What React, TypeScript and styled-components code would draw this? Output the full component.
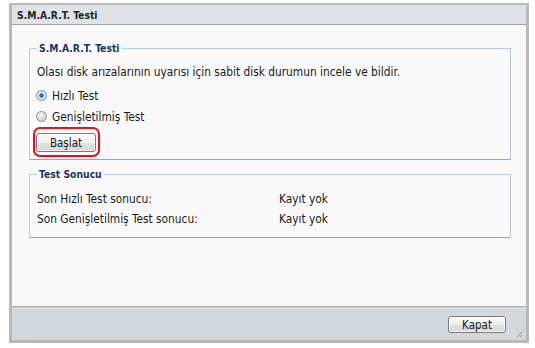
import React from "react";
import styled, { createGlobalStyle } from "styled-components";

const Global = createGlobalStyle`
  html, body { margin: 0; padding: 0; background: #ffffff; }
  body { font-family: "DejaVu Sans Condensed", "DejaVu Sans", sans-serif; font-size: 11.8px; color: #1a1a1a; }
`;

const Dialog = styled.div`
  margin: 3px 0 0 9px;
  width: 520px;
  height: 340px;
  box-sizing: border-box;
  border-style: solid;
  border-color: #b9b9b9;
  border-width: 2px 3px 3px 3px;
  display: flex;
  flex-direction: column;
  background: #f9f9f9;
`;

const TitleBar = styled.div`
  height: 19px;
  flex: none;
  background: #dfe3e7;
  border-bottom: 1px solid #a3a3a3;
  display: flex;
  align-items: center;
  padding-left: 5px;
  font-weight: bold;
  font-size: 10.3px;
  color: #222;
`;

const Content = styled.div`
  flex: 1;
  padding: 17px 15px 0 17px;
  display: flex;
  flex-direction: column;
  gap: 8px;
`;

const Group = styled.fieldset<{ $bottom: number }>`
  margin: 0;
  padding: 0 7px ${(p) => p.$bottom}px 7px;
  border: 1px solid #b2cbe3;
  border-bottom-color: #86abd0;
  min-width: 0;
`;

const Legend = styled.legend`
  padding: 0 2px;
  line-height: 13px;
  font-weight: bold;
  font-size: 10.3px;
  color: #1b3560;
`;

const Description = styled.div`
  margin-top: 9px;
  margin-bottom: 5px;
  line-height: 16px;
`;

const RadioRow = styled.label`
  display: flex;
  align-items: center;
  height: 21px;
  gap: 5px;
`;

const Radio = styled.input.attrs({ type: "radio" })`
  appearance: none;
  margin: 0 0 0 -1px;
  width: 11px;
  height: 11px;
  border-radius: 50%;
  border: 1px solid #8f8f8f;
  background: radial-gradient(circle at 40% 35%, #f6f6f6 0%, #d8d8d8 55%, #bdbdbd 100%);
  &:checked {
    background: radial-gradient(circle at 50% 50%, #3a86d6 0%, #1f5fae 30%, #e4eaf2 38%, #c9c9c9 100%);
    border-color: #7d8ea3;
  }
`;

const Highlight = styled.div`
  width: fit-content;
  margin-left: -4px;
  padding: 4px 2px 3px 1px;
  border: 2px solid #e3101b;
  border-radius: 7px;
  display: flex;
`;

const Button = styled.button<{ $w: number; $h: number }>`
  width: ${(p) => p.$w}px;
  height: ${(p) => p.$h}px;
  box-sizing: border-box;
  padding: 0;
  font-family: inherit;
  font-size: 11.5px;
  color: #1a1a1a;
  border: 1px solid #7b7b7b;
  border-radius: 3px;
  background: linear-gradient(#fbfbfb 0%, #f0f0f0 50%, #e1e1e1 51%, #d9d9d9 100%);
  box-shadow: inset 0 0 0 1px rgba(255, 255, 255, 0.7);
`;

const ResultGrid = styled.div`
  margin-top: 8px;
  display: grid;
  grid-template-columns: 242px 1fr;
  grid-auto-rows: 20px;
  align-items: center;
`;

const Footer = styled.div`
  flex: none;
  height: 34px;
  box-sizing: border-box;
  border-top: 1px solid #a9a9a9;
  background: #d3d8dc;
  display: flex;
  justify-content: flex-end;
  align-items: flex-start;
  padding: 9px 20px 0 0;
  position: relative;
`;

const Grip = styled.svg`
  position: absolute;
  right: 3px;
  bottom: 2px;
`;

export default function App() {
  return (
    <>
      <Global />
      <Dialog>
        <TitleBar>S.M.A.R.T. Testi</TitleBar>
        <Content>
          <Group $bottom={2}>
            <Legend>S.M.A.R.T. Testi</Legend>
            <Description>
              Olası disk arızalarının uyarısı için sabit disk durumun incele ve bildir.
            </Description>
            <RadioRow>
              <Radio name="t" defaultChecked />
              Hızlı Test
            </RadioRow>
            <RadioRow>
              <Radio name="t" />
              Genişletilmiş Test
            </RadioRow>
            <Highlight>
              <Button $w={60} $h={19}>Başlat</Button>
            </Highlight>
          </Group>
          <Group $bottom={8}>
            <Legend>Test Sonucu</Legend>
            <ResultGrid>
              <span>Son Hızlı Test sonucu:</span>
              <span>Kayıt yok</span>
              <span>Son Genişletilmiş Test sonucu:</span>
              <span>Kayıt yok</span>
            </ResultGrid>
          </Group>
        </Content>
        <Footer>
          <Button $w={58} $h={17}>Kapat</Button>
          <Grip width="7" height="7" viewBox="0 0 7 7">
            <path d="M1 6 L6 1 M4 6 L6 4" stroke="#8a8a8a" strokeWidth="1" />
          </Grip>
        </Footer>
      </Dialog>
    </>
  );
}
